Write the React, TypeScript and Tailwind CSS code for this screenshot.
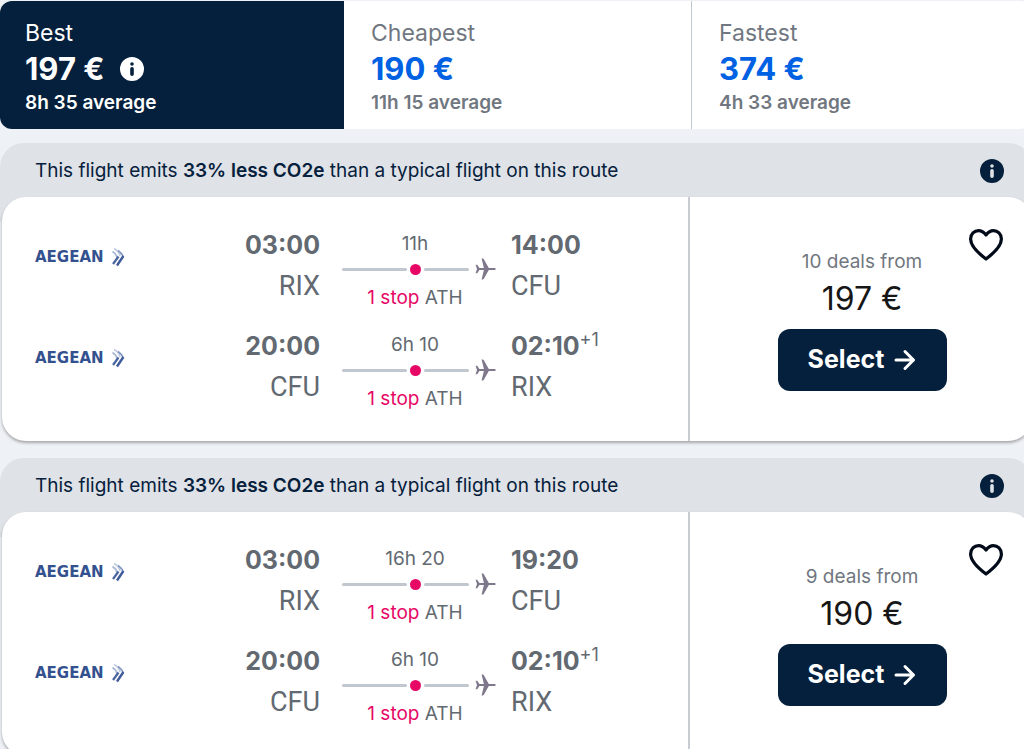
import { useState } from "react";

type Leg = {
  depart: string;
  from: string;
  duration: string;
  arrive: string;
  to: string;
  nextDay?: boolean;
};

type Flight = {
  id: number;
  deals: number;
  price: string;
  legs: Leg[];
};

const sortTabs = [
  { id: "best", label: "Best", price: "197 €", average: "8h 35 average" },
  { id: "cheapest", label: "Cheapest", price: "190 €", average: "11h 15 average" },
  { id: "fastest", label: "Fastest", price: "374 €", average: "4h 33 average" },
];

const flights: Flight[] = [
  {
    id: 1,
    deals: 10,
    price: "197 €",
    legs: [
      { depart: "03:00", from: "RIX", duration: "11h", arrive: "14:00", to: "CFU" },
      { depart: "20:00", from: "CFU", duration: "6h 10", arrive: "02:10", to: "RIX", nextDay: true },
    ],
  },
  {
    id: 2,
    deals: 9,
    price: "190 €",
    legs: [
      { depart: "03:00", from: "RIX", duration: "16h 20", arrive: "19:20", to: "CFU" },
      { depart: "20:00", from: "CFU", duration: "6h 10", arrive: "02:10", to: "RIX", nextDay: true },
    ],
  },
];

function InfoIcon({ className }: { className: string }) {
  return (
    <svg viewBox="0 0 24 24" className={`size-6 ${className}`} aria-hidden="true">
      <path
        fill="currentColor"
        fillRule="evenodd"
        d="M12 0a12 12 0 1 0 0 24a12 12 0 1 0 0-24zM12 5.2a1.8 1.8 0 1 1 0 3.6a1.8 1.8 0 1 1 0-3.6zM12 10a1.8 1.8 0 0 1 1.8 1.8v5.4a1.8 1.8 0 0 1-3.6 0v-5.4a1.8 1.8 0 0 1 1.8-1.8z"
      />
    </svg>
  );
}

function PlaneIcon() {
  return (
    <svg viewBox="0 0 21 22" className="h-[22px] w-[21px] shrink-0 text-[#7f778b]" aria-hidden="true">
      <path
        fill="currentColor"
        d="M6.6 0.6h1.2c.4 0 .7.2.9.5l5.1 8.8h5.7c.7 0 1.2.5 1.2 1.1s-.5 1.1-1.2 1.1h-5.7l-5.1 8.8c-.2.3-.5.5-.9.5H6.6l2.3-9.3H4.4l-2 2.9c-.1.2-.3.3-.5.3H.6L2 11 .6 6.7h1.3c.2 0 .4.1.5.3l2 2.9h4.5z"
      />
    </svg>
  );
}

function AegeanLogo() {
  return (
    <div className="flex items-center text-[#34518f]">
      <span className="w-[76px] font-['DejaVu_Sans',sans-serif] text-[15px] leading-5 font-bold">AEGEAN</span>
      <svg viewBox="0 0 14 20" className="h-5 w-3.5" fill="none" aria-hidden="true">
        <path d="M3 1.5Q8 4 9 9" stroke="#c3cde2" strokeWidth="1.8" />
        <path d="M1.5 4.5Q5.5 7 6 10.5" stroke="#a9b8d6" strokeWidth="1.8" />
        <path d="M7 3.5Q10.5 6 12.2 9.5" stroke="#8397c4" strokeWidth="1.6" />
        <path d="M12.4 9L6 18.5" stroke="#3d5a9a" strokeWidth="2.4" />
        <path d="M7.5 9.5L2 17" stroke="#4a66a0" strokeWidth="2.2" />
      </svg>
    </div>
  );
}

function LegRow({ leg }: { leg: Leg }) {
  return (
    <div className="flex items-start text-[#626971]">
      <div className="w-[92px] shrink-0 pt-[22px]">
        <AegeanLogo />
      </div>
      <div className="min-w-0 flex-1 text-right">
        <div className="text-[25px] leading-[41px] font-bold">{leg.depart}</div>
        <div className="font-['Roboto',sans-serif] text-[27px] leading-[41px]">{leg.from}</div>
      </div>
      <div className="mx-[22px] w-[154px] shrink-0 pt-[5px] text-center">
        <div className="pr-2 text-[19px] leading-7">{leg.duration}</div>
        <div className="flex h-[22px] items-center">
          <span className="h-[3px] w-[65px] rounded-full bg-[#c1c7cf]" />
          <span className="mx-[3px] size-[11px] rounded-full bg-[#e70866]" />
          <span className="h-[3px] flex-1 rounded-full bg-[#c1c7cf]" />
          <span className="ml-1.5">
            <PlaneIcon />
          </span>
        </div>
        <div className="pt-1 pr-2 text-[19px] leading-7">
          <span className="text-[#e70866]">1 stop</span> ATH
        </div>
      </div>
      <div className="-ml-[7px] w-[177px] shrink-0">
        <div className="flex text-[25px] leading-[41px] font-bold">
          {leg.arrive}
          {leg.nextDay && <span className="text-lg leading-7 font-normal">+1</span>}
        </div>
        <div className="font-['Roboto',sans-serif] text-[27px] leading-[41px]">{leg.to}</div>
      </div>
    </div>
  );
}

function FlightCard({ flight }: { flight: Flight }) {
  const [saved, setSaved] = useState(false);

  return (
    <article>
      <div className="flex items-center justify-between rounded-t-3xl bg-[#dfe2e6] pt-[15px] pr-7 pb-[39px] pl-[35px] text-[#05203c]">
        <p className="pt-px text-[19px] leading-6">
          This flight emits <strong className="font-semibold">33% less CO2e</strong> than a typical flight on this route
        </p>
        <button type="button" aria-label="About emissions">
          <InfoIcon className="text-[#05203c]" />
        </button>
      </div>
      <div className="-mt-[25px] ml-0.5 flex rounded-3xl bg-white shadow-[0_2px_3px_rgba(37,32,31,0.35)]">
        <div className="flex min-w-0 flex-1 flex-col gap-3.5 pt-7 pb-7 pl-[33px]">
          {flight.legs.map((leg) => (
            <LegRow key={leg.from} leg={leg} />
          ))}
        </div>
        <div className="relative flex w-[344px] shrink-0 flex-col items-center border-l-2 border-[#c8ccd3] pt-[51px] pl-0.5">
          <button
            type="button"
            aria-label="Save flight"
            aria-pressed={saved}
            onClick={() => setSaved(!saved)}
            className="absolute top-[31px] right-7"
          >
            <svg viewBox="0 0 36 34" className="h-[34px] w-9" fill={saved ? "#e70866" : "none"} aria-hidden="true">
              <path
                d="M18 31C12 26.5 2.6 18.8 2.6 11C2.6 6 6.3 2.6 10.6 2.6C13.8 2.6 16 4.4 18 7C20 4.4 22.2 2.6 25.4 2.6C29.7 2.6 33.4 6 33.4 11C33.4 18.8 24 26.5 18 31Z"
                stroke="#000a18"
                strokeWidth="3.2"
                strokeLinejoin="round"
              />
            </svg>
          </button>
          <div className="text-[19px] leading-7 text-[#717780]">{flight.deals} deals from</div>
          <div className="text-[32px] leading-[46px] text-[#161616]">{flight.price}</div>
          <button
            type="button"
            className="mt-[7px] flex h-[62px] w-[169px] items-center justify-center gap-2.5 rounded-xl bg-[#05203c] text-[25px] font-bold text-white"
          >
            Select
            <svg viewBox="0 0 22 22" className="size-[22px]" fill="none" aria-hidden="true">
              <path
                d="M2 11H19.5M11 2.5L19.5 11L11 19.5"
                stroke="currentColor"
                strokeWidth="3"
                strokeLinecap="round"
                strokeLinejoin="round"
              />
            </svg>
          </button>
        </div>
      </div>
    </article>
  );
}

export default function App() {
  const [active, setActive] = useState("best");

  return (
    <div className="h-screen overflow-hidden bg-[#eef1f6] pt-px font-['Inter',sans-serif]">
      <main className="-mr-2">
        <div role="tablist" className="grid grid-cols-[344fr_348fr_340fr] overflow-hidden rounded-xl bg-white">
          {sortTabs.map((tab) => {
            const selected = tab.id === active;
            return (
              <button
                key={tab.id}
                type="button"
                role="tab"
                aria-selected={selected}
                onClick={() => setActive(tab.id)}
                className={`border-r pt-4 pb-3 text-left last:border-r-0 ${
                  selected
                    ? "border-[#05203c] bg-[#05203c] pl-[25px] text-white"
                    : "border-[#c1c7cf] pl-[27px] text-[#717780]"
                }`}
              >
                <span className="block text-[23px] leading-8">{tab.label}</span>
                <span className="flex items-center gap-4">
                  <span className={`text-[31px] leading-10 font-bold ${selected ? "text-white" : "text-[#0062e3]"}`}>
                    {tab.price}
                  </span>
                  {selected && <InfoIcon className="text-white" />}
                </span>
                <span className="block text-[19px] leading-7 font-semibold">{tab.average}</span>
              </button>
            );
          })}
        </div>
        <div className="mt-3.5 flex flex-col gap-[17px]">
          {flights.map((flight) => (
            <FlightCard key={flight.id} flight={flight} />
          ))}
        </div>
      </main>
    </div>
  );
}
